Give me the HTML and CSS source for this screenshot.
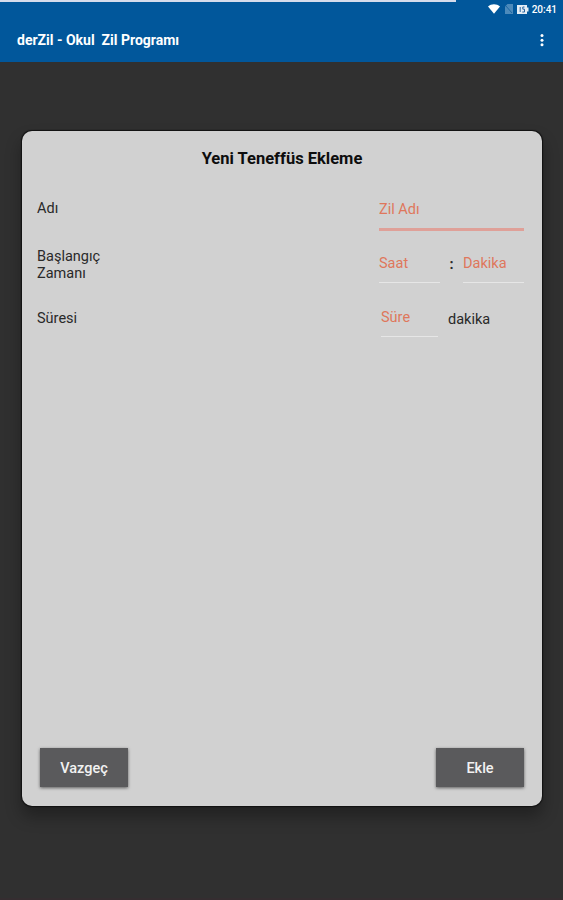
FILE: index.html
```html
<!DOCTYPE html>
<html lang="tr">
<head>
    <meta charset="UTF-8">
    <meta name="viewport" content="width=device-width, initial-scale=1.0">
    <title>derZil - Okul Zil Programı</title>
    <link rel="stylesheet" href="styles.css">
</head>
<body>
    <header>
        <div class="progress"></div>
        <div class="status-bar">
            <svg class="wifi" width="12" height="10" viewBox="0 0 12 10"><path d="M0 2.4C3.4-.4 8.6-.4 12 2.4L6 9.8z" fill="#fff"/></svg>
            <svg class="sim" width="8" height="10" viewBox="0 0 8 10"><path d="M2.5 0H8v10H0V2.5z" fill="#4c8abb"/><path d="M1 2l6 7" stroke="#1d66a3"/></svg>
            <svg class="battery" width="12" height="9" viewBox="0 0 12 9"><path d="M0 0h10v2.5h1.5v4H10V9H0z" fill="#e4edf5"/><path d="M3.2 2v5M7.5 2H5.8v2.2h1.7V7H5.3" fill="none" stroke="#2765a0"/></svg>
            <span>20:41</span>
        </div>
        <div class="toolbar">
            <h1>derZil - Okul&nbsp; Zil Programı</h1>
            <svg class="more" width="4" height="14" viewBox="0 0 4 14" fill="#fff"><circle cx="2" cy="2.6" r="1.5"/><circle cx="2" cy="7.2" r="1.5"/><circle cx="2" cy="11.8" r="1.5"/></svg>
        </div>
    </header>

    <form class="card">
        <h2>Yeni Teneffüs Ekleme</h2>
        <div class="row">
            <label for="name">Adı</label>
            <div class="fields">
                <input type="text" id="name" class="name" placeholder="Zil Adı">
            </div>
        </div>
        <div class="row row-time">
            <label for="hour">Başlangıç Zamanı</label>
            <div class="fields">
                <input type="text" id="hour" class="hour" placeholder="Saat">
                <span class="colon">:</span>
                <input type="text" id="minute" class="minute" placeholder="Dakika">
            </div>
        </div>
        <div class="row row-duration">
            <label for="duration">Süresi</label>
            <div class="fields">
                <input type="text" id="duration" class="duration" placeholder="Süre">
                <span class="unit">dakika</span>
            </div>
        </div>
        <div class="buttons">
            <button type="button">Vazgeç</button>
            <button type="button">Ekle</button>
        </div>
    </form>
</body>
</html>
```
FILE: styles.css
```css
* {
    box-sizing: border-box;
}
body {
    margin: 0;
    height: 900px;
    background-color: #303030;
    border-bottom: 2px solid #352d30;
    font-family: Roboto, 'Liberation Sans', sans-serif;
    color: #292929;
    overflow: hidden;
}
header {
    height: 62px;
    background-color: #01579b;
    color: #fff;
}
.progress {
    width: 456px;
    height: 2px;
    background-color: #d6dcec;
}
.status-bar {
    display: flex;
    justify-content: flex-end;
    align-items: center;
    height: 14px;
    padding-right: 6px;
    font-size: 10px;
    font-weight: 500;
}
.wifi {
    margin-right: 5px;
}
.sim {
    margin-right: 4px;
}
.battery {
    margin-right: 3px;
}
.toolbar {
    display: flex;
    justify-content: space-between;
    align-items: center;
    height: 48px;
    padding: 0 19px 0 17px;
}
h1 {
    margin: 0;
    font-size: 14px;
    font-weight: 700;
}
.card {
    display: flex;
    flex-direction: column;
    width: 520px;
    height: 675px;
    margin: 69px 0 0 22px;
    padding: 18px 18px 18px 15px;
    background-color: #d1d1d1;
    border-radius: 10px;
    box-shadow: 0 0 1px 1px #111, 0 10px 16px 1px rgba(0, 0, 0, 0.3);
}
h2 {
    margin: 0 0 19px;
    font-size: 16.5px;
    line-height: 20px;
    font-weight: 700;
    text-align: center;
    text-indent: 3px;
    color: #0d0d0d;
}
.row {
    display: flex;
    justify-content: space-between;
    height: 54px;
    font-size: 14.5px;
    line-height: 17px;
}
.row label {
    width: 80px;
    padding-top: 12px;
}
.row-time label {
    padding-top: 6px;
}
.row-duration label {
    padding-top: 14px;
}
.fields {
    display: flex;
    align-items: flex-start;
    width: 145px;
}
input {
    height: 41px;
    padding: 3px 0 0;
    background: none;
    border: none;
    border-bottom: 1px solid #e6e6e6;
    border-radius: 0;
    outline: none;
    font-family: inherit;
    font-size: 14.5px;
    color: #292929;
}
input::placeholder {
    color: #df775c;
    opacity: 1;
}
.name {
    width: 145px;
    height: 43px;
    padding-top: 2px;
    border-bottom: 3px solid #dfa098;
}
.hour {
    width: 61px;
}
.minute {
    width: 61px;
}
.colon {
    width: 23px;
    padding-top: 14px;
    text-align: center;
    font-weight: 700;
}
.duration {
    width: 57px;
    margin-left: 2px;
}
.unit {
    margin-left: 10px;
    padding-top: 15px;
}
.buttons {
    display: flex;
    justify-content: space-between;
    margin-top: auto;
    padding: 0 0 1px 3px;
}
button {
    width: 88px;
    height: 39px;
    padding: 1px 0 0;
    background-color: #5a5a5c;
    color: #f2f2f2;
    border: none;
    box-shadow: 0 1px 3px rgba(0, 0, 0, 0.55);
    font-family: inherit;
    font-size: 14.5px;
    font-weight: 500;
    cursor: pointer;
}
```
